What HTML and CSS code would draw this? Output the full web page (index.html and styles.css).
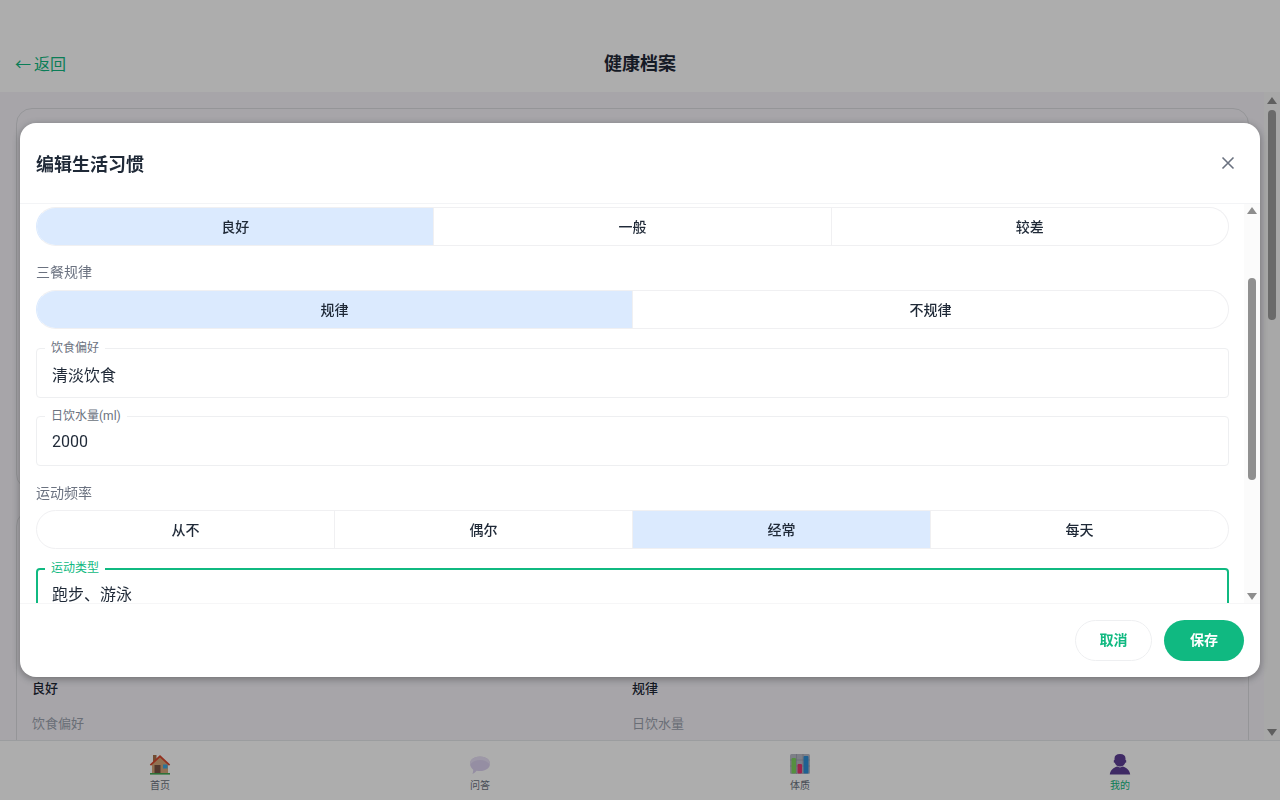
FILE: index.html
```html
<!DOCTYPE html>
<html lang="zh-CN">
<head>
<meta charset="utf-8">
<title>健康档案</title>
<link rel="stylesheet" href="styles.css">
</head>
<body>
<div class="app">
  <header class="topbar">
    <a class="back">← 返回</a>
    <h1 class="page-title">健康档案</h1>
  </header>
  <div class="main">
    <main class="main-scroll">
      <div class="page-inner">
        <section class="card card-basic">
          <h2 class="card-title">基本信息</h2>
        </section>
        <section class="card card-habits">
          <h2 class="card-title">生活习惯</h2>
          <div class="info-grid">
            <div class="info"><span class="info-label">吸烟情况</span><span class="info-value">从不</span></div>
            <div class="info"><span class="info-label">饮酒情况</span><span class="info-value">偶尔</span></div>
            <div class="info"><span class="info-label">睡眠质量</span><span class="info-value">良好</span></div>
            <div class="info"><span class="info-label">三餐规律</span><span class="info-value">规律</span></div>
            <div class="info"><span class="info-label">饮食偏好</span><span class="info-value">清淡饮食</span></div>
            <div class="info"><span class="info-label">日饮水量</span><span class="info-value">2000ml</span></div>
          </div>
        </section>
      </div>
    </main>
    <div class="sbar sbar-main"><i class="sbar-up"></i><i class="sbar-thumb"></i><i class="sbar-down"></i></div>
  </div>
  <nav class="tabbar">
    <a class="tab">
      <svg class="tab-icon" viewBox="0 0 24 24"><rect x="5" y="3" width="3.500" height="8" fill="#a9714b"/><path d="M4 11.500 12 4l8 7.500V21H4z" fill="#d6a67a"/><path d="M1.800 12.500 12 3l10.200 9.500-1.200 1.300L12 5.600 3 13.800z" fill="#d9482f"/><rect x="6.500" y="13" width="6" height="8" fill="#7a5245"/><rect x="15" y="12.500" width="4.500" height="4" fill="#3fa7e0"/><rect x="2" y="21" width="20" height="1.600" fill="#43a854"/></svg>
      <span class="tab-label">首页</span>
    </a>
    <a class="tab">
      <svg class="tab-icon" viewBox="0 0 24 24"><path d="M12 4.500c5.700 0 10 3 10 7.300s-4.300 7.300-10 7.300c-1.200 0-2.300-.1-3.400-.4-.8 1-2.200 2.300-4.200 3.300.5-1.300.9-2.800.8-4.300C3.500 16.300 2 14.200 2 11.800c0-4.300 4.300-7.300 10-7.300z" fill="#dcd2f0"/><path d="M12 4.500c5.700 0 10 3 10 7.300 0 .4 0 .8-.1 1.100C20 9.800 16.300 8 12 8s-8 1.800-9.900 4.900c-.1-.3-.1-.7-.1-1.100 0-4.300 4.300-7.300 10-7.300z" fill="#e8e0f6"/></svg>
      <span class="tab-label">问答</span>
    </a>
    <a class="tab">
      <svg class="tab-icon" viewBox="0 0 24 24"><rect x="2" y="2" width="20" height="20" rx="1.500" fill="#b9bcc8"/><path d="M2 8h20M2 14h20M8.500 2v20M15 2v20" stroke="#9296a6" stroke-width=".6"/><rect x="3.500" y="6" width="4.500" height="15.500" rx="1" fill="#7ed35f"/><rect x="9.500" y="12" width="4.500" height="9.500" rx="1" fill="#e8346f"/><rect x="15.500" y="4" width="5" height="17.500" rx="1" fill="#2e8fd8"/></svg>
      <span class="tab-label">体质</span>
    </a>
    <a class="tab tab-active">
      <svg class="tab-icon" viewBox="0 0 24 24"><path d="M12 2c3.700 0 5.500 1.600 5.500 4.500V8l.7.300v2.100l-1 .4C16.600 13 14.700 14.500 12 14.500S7.400 13 6.800 10.800l-1-.4V8.300l.7-.3V6.500C6.500 3.600 8.300 2 12 2z" fill="#5e3f96"/><path d="M1.800 22.500c.5-4 3.200-6.500 7.400-7.900.8.400 1.800.8 2.800.8s2-.4 2.800-.8c4.200 1.400 6.900 3.900 7.400 7.900z" fill="#5e3f96"/></svg>
      <span class="tab-label">我的</span>
    </a>
  </nav>
</div>

<div class="overlay">
  <div class="dialog">
    <div class="dialog-head">
      <h2 class="dialog-title">编辑生活习惯</h2>
      <button class="close" aria-label="关闭">
        <svg viewBox="0 0 24 24" width="24" height="24"><path d="M6.500 6.500l11 11M17.500 6.500l-11 11" stroke="#6b7280" stroke-width="1.600" fill="none"/></svg>
      </button>
    </div>
    <div class="dialog-mid">
      <div class="dialog-body">
        <div class="seg"><span class="seg-item seg-on">良好</span><span class="seg-item">一般</span><span class="seg-item">较差</span></div>
        <div class="group-label group-meals">三餐规律</div>
        <div class="seg"><span class="seg-item seg-on">规律</span><span class="seg-item">不规律</span></div>
        <div class="field"><label class="field-label">饮食偏好</label><input class="field-input" value="清淡饮食"></div>
        <div class="field field-num"><label class="field-label">日饮水量(ml)</label><input class="field-input" value="2000"></div>
        <div class="group-label group-sport">运动频率</div>
        <div class="seg"><span class="seg-item">从不</span><span class="seg-item">偶尔</span><span class="seg-item seg-on">经常</span><span class="seg-item">每天</span></div>
        <div class="field field-focus"><label class="field-label">运动类型</label><input class="field-input" value="跑步、游泳"></div>
      </div>
      <div class="sbar sbar-dialog"><i class="sbar-up"></i><i class="sbar-thumb"></i><i class="sbar-down"></i></div>
    </div>
    <div class="dialog-actions">
      <button class="btn btn-cancel">取消</button>
      <button class="btn btn-save">保存</button>
    </div>
  </div>
</div>
</body>
</html>
```
FILE: styles.css
```css
* { box-sizing: border-box; }
html, body { margin: 0; height: 100%; overflow: hidden; }
body {
  font-family: Roboto, "Noto Sans CJK SC", sans-serif;
  color: #1f2937;
  background: #f6f4fa;
}
.app { display: flex; flex-direction: column; height: 800px; }
.topbar {
  height: 92px;
  flex: none;
  background: #fff;
  display: flex;
  align-items: flex-end;
  justify-content: center;
  padding-bottom: 14px;
  position: relative;
}
.back {
  position: absolute;
  left: 15px;
  bottom: 14px;
  font-size: 16px;
  line-height: 26px;
  word-spacing: -1px;
  color: #10b981;
}
.page-title { margin: 0; font-size: 18px; line-height: 28px; font-weight: 600; }

.main { flex: 1; min-height: 0; display: flex; background: #f6f4fa; }
.main-scroll { flex: 1; min-width: 0; overflow: hidden; }
.page-inner { padding: 16px 15px 0 16px; display: flex; flex-direction: column; gap: 20px; }
.card {
  background: #f6f4fa;
  border: 1px solid #dcdce0;
  border-radius: 16px;
  padding: 16px 16px 16px 15px;
}
.card-basic { height: 382px; }
.card-title { margin: 0 0 41px; font-size: 18px; line-height: 28px; font-weight: 600; }
.info-grid { display: grid; grid-template-columns: 1fr 1fr; row-gap: 15px; }
.info { display: flex; flex-direction: column; gap: 4px; }
.info-label { font-size: 13px; line-height: 20px; color: #9ca3af; }
.info-value { font-size: 13px; line-height: 20px; font-weight: 500; color: #1f2937; }

.sbar { width: 16px; flex: none; display: flex; flex-direction: column; align-items: center; background: #f8f8f8; }
.sbar-up { width: 0; height: 0; border: 5px solid transparent; border-top: 0; border-bottom: 7px solid #8d8d8d; }
.sbar-down { width: 0; height: 0; margin-top: auto; border: 5px solid transparent; border-bottom: 0; border-top: 7px solid #8d8d8d; }
.sbar-thumb { width: 8px; border-radius: 4px; background: #9d9d9d; }
.sbar-main { padding: 5px 0 4px; }
.sbar-main .sbar-thumb { height: 210px; margin-top: 6px; }
.sbar-dialog { padding: 3px 0; background: #fbfbfb; }
.sbar-dialog .sbar-thumb { height: 202px; margin-top: 64px; background: #909090; }

.tabbar {
  height: 60px;
  flex: none;
  background: #fff;
  border-top: 1px solid #e5e7eb;
  display: grid;
  grid-template-columns: repeat(4, 1fr);
}
.tab { display: flex; flex-direction: column; align-items: center; padding-top: 11px; color: #6b7280; }
.tab-active { color: #10b981; }
.tab-icon { width: 24px; height: 24px; display: block; }
.tab-label { font-size: 10px; line-height: 14px; margin-top: 3px; }

.overlay {
  position: fixed;
  inset: 0;
  background: rgba(0, 0, 0, .32);
  display: flex;
  align-items: center;
  justify-content: center;
}
.dialog {
  width: 1240px;
  height: 554px;
  background: #fff;
  border-radius: 16px;
  display: flex;
  flex-direction: column;
  overflow: hidden;
  box-shadow: 0 2px 8px rgba(0, 0, 0, .35);
}
.dialog-head {
  height: 81px;
  flex: none;
  display: flex;
  align-items: center;
  justify-content: space-between;
  padding: 3px 20px 0 16px;
  border-bottom: 1px solid #f3f4f6;
}
.dialog-title { margin: 0; font-size: 18px; line-height: 28px; font-weight: 600; color: #1f2937; }
.close { border: 0; background: none; padding: 0; width: 24px; height: 24px; margin-top: -3px; }
.close svg { display: block; }
.dialog-mid { flex: 1; min-height: 0; display: flex; }
.dialog-body { flex: 1; min-width: 0; overflow: hidden; padding: 3px 15px 0 16px; }
.group-label { font-size: 14px; line-height: 20px; color: #6b7280; }
.group-meals { margin: 16px 0 8px; }
.group-sport { margin: 17px 0 7px; }
.seg {
  display: flex;
  height: 39px;
  border: 1px solid #f0f0f2;
  border-radius: 20px;
  overflow: hidden;
}
.seg:has(.seg-item:first-child.seg-on) { border-left-color: #dbeafe; }
.seg-item {
  flex: 1;
  display: flex;
  align-items: center;
  justify-content: center;
  padding-bottom: 2px;
  font-size: 14px;
  font-weight: 500;
  color: #1f2937;
  border-left: 1px solid #f0f0f2;
}
.seg-item:first-child { border-left: 0; }
.seg-on { background: #dbeafe; }
.field {
  position: relative;
  height: 50px;
  margin-top: 18px;
  border: 1px solid #eeeff1;
  border-radius: 4px;
}
.seg + .field { margin-top: 19px; }
.field-label {
  position: absolute;
  left: 8px;
  top: -9px;
  padding: 0 6px;
  background: #fff;
  font-size: 12px;
  line-height: 16px;
  color: #6b7280;
}
.field-input {
  width: 100%;
  height: 100%;
  border: 0;
  outline: 0;
  background: none;
  padding: 2px 15px 0;
  font: inherit;
  font-size: 16px;
  color: #1f2937;
}
.field-num .field-input { padding-top: 0; }
.field-focus { border: 2px solid #10b981; }
.field-focus .field-label { color: #10b981; left: 7px; top: -10px; }
.field-focus .field-input { padding: 0 14px; }
.dialog-actions {
  height: 74px;
  flex: none;
  display: flex;
  align-items: center;
  justify-content: flex-end;
  gap: 12px;
  padding: 0 16px;
  border-top: 1px solid #f6f6f7;
}
.btn {
  height: 41px;
  border-radius: 21px;
  font-family: inherit;
  font-size: 14px;
  font-weight: 600;
  padding: 0 0 3px;
}
.btn-cancel { width: 77px; background: #fff; border: 1px solid #eeeff1; color: #10b981; }
.btn-save { width: 80px; background: #10b981; border: 0; color: #fff; }
```
